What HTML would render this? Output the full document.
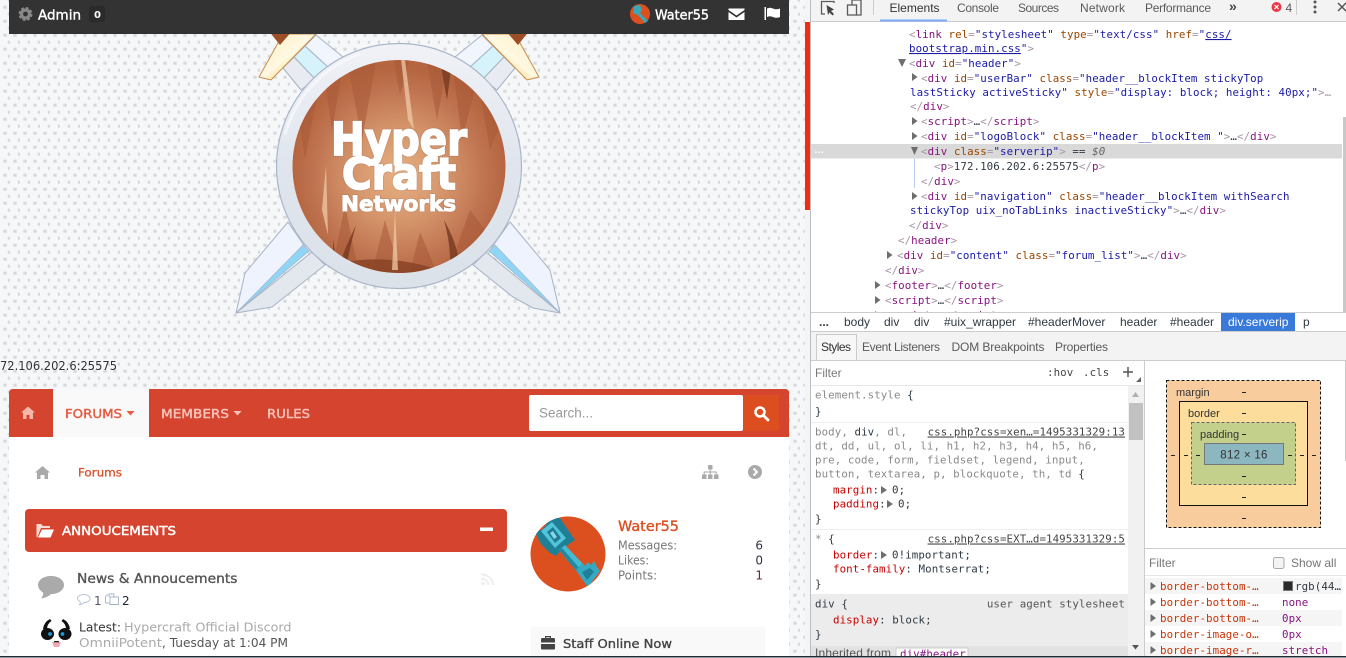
<!DOCTYPE html>
<html><head><meta charset="utf-8"><title>HyperCraft Networks - DevTools</title>
<style>
html,body{margin:0;padding:0;background:#fff;width:1346px;height:658px;overflow:hidden}
svg{display:block;position:absolute;left:0;top:0}
text{white-space:pre}
.s{font-family:"DejaVu Sans","Liberation Sans",sans-serif}
.u{font-family:"Liberation Sans",sans-serif;font-size:12px;fill:#5a5a5a}
.m{font-family:"DejaVu Sans Mono","Liberation Mono",monospace;font-size:10.8px;letter-spacing:.08px;fill:#303942}
.g{fill:#a894a6}.t{fill:#881280}.a{fill:#994500}.v{fill:#1a1aa6}.k{fill:#303942}
.p{fill:#c80000}.l{fill:#8a8a8a}
.n{fill:#c8340a}
</style></head><body>
<svg width="1346" height="658" viewBox="0 0 1346 658" xmlns="http://www.w3.org/2000/svg">
<defs>
<pattern id="dots" width="10" height="14" patternUnits="userSpaceOnUse" x="0" y="0">
<rect x="7.8" y="-1.3" width="3.4" height="3" fill="#d8d9db"/><rect x="7.8" y="12.7" width="3.4" height="3" fill="#d8d9db"/>
<rect x="3.3" y="5.700" width="3.4" height="3" fill="#d8d9db"/>
</pattern>
<radialGradient id="wood" gradientUnits="userSpaceOnUse" cx="399" cy="175" r="108">
<stop offset="0" stop-color="#e6b083"/><stop offset=".45" stop-color="#d4946a"/><stop offset=".8" stop-color="#bf7350"/><stop offset="1" stop-color="#b5653f"/>
</radialGradient>
<linearGradient id="ring" x1="0" y1="0" x2="0" y2="1"><stop offset="0" stop-color="#f0f2f7"/><stop offset=".5" stop-color="#e0e5ed"/><stop offset="1" stop-color="#dce2ea"/></linearGradient>
<linearGradient id="gold" x1="0" y1="1" x2="1" y2="0"><stop offset="0" stop-color="#f9e9c4"/><stop offset=".25" stop-color="#fbd468"/><stop offset=".5" stop-color="#fff8e2"/><stop offset=".8" stop-color="#fff3cf"/><stop offset="1" stop-color="#f7d179"/></linearGradient>
<linearGradient id="gold2" x1="1" y1="1" x2="0" y2="0"><stop offset="0" stop-color="#f9e9c4"/><stop offset=".25" stop-color="#fbd468"/><stop offset=".5" stop-color="#fff8e2"/><stop offset=".8" stop-color="#fff3cf"/><stop offset="1" stop-color="#f7d179"/></linearGradient>
<clipPath id="woodclip"><circle cx="399" cy="166.5" r="106.5"/></clipPath>
<clipPath id="av"><circle cx="568" cy="554" r="37.5"/></clipPath>
<clipPath id="elem"><rect x="811" y="22" width="532" height="290"/></clipPath>
</defs>

<!-- page background -->
<rect width="810" height="658" fill="#f6f7f9"/>
<rect width="806" height="658" fill="url(#dots)"/>

<!-- swords -->
<g stroke="#a6b4c6" stroke-width="1" stroke-linejoin="round">
<polygon points="455,57 469,68 493,46 482,35" fill="#f1f5fe"/>
<polygon points="469,68 483,79 504,57 493,46" fill="#d6f2fb"/>
<polygon points="483,79 497,90 515,68 504,57" fill="#e8ebf1"/>
<polygon points="343,57 329,68 305,46 316,35" fill="#f1f5fe"/>
<polygon points="329,68 315,79 294,57 305,46" fill="#d6f2fb"/>
<polygon points="315,79 301,90 283,68 294,57" fill="#e8ebf1"/>
<polygon points="236,313 245,273 288,222 305,247" fill="#eef3fd"/>
<polygon points="236,313 272,307 325,265 312,252" fill="#e3e7ee"/>
<polygon points="236,313 303,245 309,251" fill="#8fd5f6" stroke="#a6b4c6" stroke-width=".7"/>
<polygon points="560,313 550,270 510,222 492,247" fill="#eef3fd"/>
<polygon points="560,313 533,308 513,297 473,265 486,252" fill="#e3e7ee"/>
<polygon points="560,313 495,245 489,251" fill="#8fd5f6" stroke="#a6b4c6" stroke-width=".7"/>
</g>
<!-- guards & handles -->
<polygon points="482,34 527,80 539,77 515,34" fill="url(#gold)" stroke="#c98d4a"/>
<polygon points="316,34 271,80 259,77 283,34" fill="url(#gold2)" stroke="#c98d4a"/>
<polygon points="505,30 530,30 518,45" fill="#9c4e26"/>
<polygon points="293,30 268,30 280,45" fill="#9c4e26"/>

<!-- ring -->
<circle cx="399" cy="166" r="122.5" fill="url(#ring)" stroke="#a9b6c8" stroke-width="1.2"/>
<path d="M285 135 A118 118 0 0 1 360 54" fill="none" stroke="#f8f9fc" stroke-width="3" opacity=".7"/>
<circle cx="399" cy="166.5" r="106.5" fill="url(#wood)"/>
<g clip-path="url(#woodclip)">
<g fill="#a8593a" opacity=".55">
<polygon points="295,90 305,160 320,80"/><polygon points="322,60 332,130 345,55"/>
<polygon points="345,50 362,140 378,50"/><polygon points="392,50 400,95 412,50"/>
<polygon points="425,50 437,120 450,50"/><polygon points="452,60 462,140 480,70"/>
<polygon points="478,80 490,150 506,110"/><polygon points="292,180 305,240 320,275 292,260"/>
<polygon points="330,280 345,205 360,280"/><polygon points="370,280 385,220 402,280"/>
<polygon points="408,280 420,232 440,280"/><polygon points="445,280 470,210 500,250 490,280"/>
</g>
<g fill="#7a3d22" opacity=".85">
<polygon points="323,72 340,62 330,86"/><polygon points="440,60 452,62 447,100"/>
<polygon points="333,262 333,240 336,258"/>
<polygon points="500,210 488,238 504,216"/>
<path d="M338 268 Q345 248 356 225 Q349 250 346 270Z"/><path d="M450 268 Q451 245 444 220 Q458 245 459 265Z"/>
<path d="M345 262 Q390 254 440 270 L430 285 L350 285Z" fill="#8a4426"/>
</g>
<g fill="#efc9a6" opacity=".75">
<polygon points="400,50 405,60 414,130 408,120"/><polygon points="392,270 395,210 398,270"/><polygon points="322,210 326,165 328,235"/>
</g>
</g>
<g class="s" font-weight="700" fill="#fff" stroke="#fff" stroke-width="1.800" style="filter:drop-shadow(0 0 .6px #9a6048)">
<text x="331" y="155" font-size="45" textLength="136" lengthAdjust="spacingAndGlyphs">Hyper</text>
<text x="342" y="189" font-size="44" textLength="114" lengthAdjust="spacingAndGlyphs">Craft</text>
<text x="341" y="211" font-size="21" textLength="115" lengthAdjust="spacingAndGlyphs" stroke-width="1">Networks</text>
</g>

<!-- top bar -->
<rect x="9" width="780" height="34" fill="#333"/>
<circle cx="25.5" cy="14" r="4" fill="none" stroke="#888" stroke-width="3.2"/>
<circle cx="25.5" cy="14" r="5.9" fill="none" stroke="#888" stroke-width="2.2" stroke-dasharray="2.8 1.85"/>
<text class="s" x="38" y="19.5" font-size="13.5" font-weight="500" fill="#fff" stroke="#fff" stroke-width=".4" textLength="43" lengthAdjust="spacingAndGlyphs">Admin</text>
<rect x="89" y="6" width="16" height="16" rx="2" fill="#2a2a2a"/>
<text class="s" x="94" y="18" font-size="10" font-weight="700" fill="#fff">0</text>
<circle cx="640" cy="14" r="10" fill="#dc5020"/>
<path d="M634 6 L640 5 L642 10 L640 13 L648 21 L645 23 L638 15 L633 13Z" fill="#3aa7b8"/>
<text class="s" x="655" y="19.5" font-size="13.5" font-weight="500" fill="#fff" stroke="#fff" stroke-width=".4" textLength="54" lengthAdjust="spacingAndGlyphs">Water55</text>
<path d="M728.5 8.500 H744.5 V10 L736.5 15.500 L728.5 10Z M728.5 12 L736.5 17.500 L744.5 12 V20 H728.5Z" fill="#fff"/>
<path d="M764.5 7 H766 V20 H764.5Z M767 8.5 Q770 7 773 8.5 T780 8.5 V17 Q776.500 18.500 773 17 T767 17Z" fill="#fff"/>

<!-- server ip -->
<text class="s" x="0" y="370" font-size="12.500" fill="#333" textLength="117" lengthAdjust="spacingAndGlyphs">72.106.202.6:25575</text>

<!-- main content -->
<rect x="9" y="430" width="780" height="227" fill="#fff"/>
<path d="M9 437 V393 Q9 389 13 389 H785 Q789 389 789 393 V437Z" fill="#d5442f"/>
<rect x="53" y="389" width="96" height="48" fill="#f9f9f9"/>
<path d="M28 406.500 L35 412.500 H33 V419 H29.500 V415 H26.500 V419 H23 V412.500 H21Z" fill="#f6b7aa"/>
<g class="s" font-size="12.500" font-weight="500" stroke-width=".4">
<text x="65" y="418" fill="#e65a3f" stroke="#e65a3f" textLength="57" lengthAdjust="spacingAndGlyphs">FORUMS</text>
<text x="161" y="418" fill="#f5c4ba" stroke="#f5c4ba" textLength="68" lengthAdjust="spacingAndGlyphs">MEMBERS</text>
<text x="267" y="418" fill="#f5c4ba" stroke="#f5c4ba" textLength="43" lengthAdjust="spacingAndGlyphs">RULES</text>
</g>
<polygon points="126.500,411 134.500,411 130.500,415.500" fill="#e65a3f"/>
<polygon points="233.500,411 241.500,411 237.500,415.500" fill="#f5c4ba"/>
<rect x="529" y="395" width="214" height="36" rx="2" fill="#fff"/>
<rect x="743" y="395" width="36" height="36" fill="#dc4e20"/>
<text class="u" x="539" y="417.500" style="font-size:13.500px;fill:#999">Search...</text>
<circle cx="760" cy="412" r="4.500" fill="none" stroke="#fff" stroke-width="2.500"/>
<path d="M763.500 415.500 L768 420" stroke="#fff" stroke-width="2.800" stroke-linecap="round"/>

<!-- breadcrumb -->
<path d="M42.500 466 L50 472.500 H48 V479 H44.500 V475 H40.500 V479 H37 V472.500 H35Z" fill="#aaa"/>
<text class="s" x="78" y="476.500" font-size="11.500" fill="#d9502a" stroke="#d9502a" stroke-width=".3" textLength="44" lengthAdjust="spacingAndGlyphs">Forums</text>
<g fill="#aaa"><rect x="708" y="465" width="4.500" height="4.500" rx=".8"/><rect x="702" y="474.500" width="4.500" height="4.500"/><rect x="708" y="474.500" width="4.500" height="4.500"/><rect x="714" y="474.500" width="4.500" height="4.500"/></g>
<path d="M710.200 469 V474.500 M704.200 474.500 V472 H716.200 V474.500" stroke="#aaa" fill="none"/>
<circle cx="755" cy="472" r="7" fill="#aaa"/>
<path d="M753.500 468.500 L757 472 L753.500 475.500" fill="none" stroke="#fff" stroke-width="2"/>

<!-- panel header -->
<rect x="25" y="509" width="482" height="43" rx="4" fill="#d5442f"/>
<path d="M36.500 537 V524 H41 L43 526 H50 V528 H41 L37.500 537Z" fill="#f7dcd6"/><path d="M38 537.500 L42 529.500 H54 L50.500 537.500Z" fill="#fff"/>
<text class="s" x="62" y="535" font-size="12.500" font-weight="500" fill="#fff" stroke="#fff" stroke-width=".45" textLength="114" lengthAdjust="spacingAndGlyphs">ANNOUCEMENTS</text>
<rect x="480" y="527.500" width="13" height="3.500" rx=".5" fill="#fff"/>

<!-- forum row -->
<path d="M51 576 C58.500 576 64 580 64 585 C64 590 58.500 594 51.500 594 C48 596.500 45 598 41 598.500 C43 596 43.500 594 43 592.500 C40 590.500 38 588 38 585 C38 580 43.500 576 51 576Z" fill="#aaa"/>
<text class="s" x="77" y="583" font-size="13.500" fill="#555" stroke="#555" stroke-width=".35" textLength="160.500" lengthAdjust="spacingAndGlyphs">News &amp; Annoucements</text>
<path d="M83.500 594.500 C87.500 594.500 90 596.500 90 598.500 C90 601 87.500 602.500 84 602.500 C82.500 604 81 604.500 79.500 604.500 C80.500 603.500 80.500 602.500 80 601.500 C78 600.500 77.500 599.500 77.500 598.500 C77.500 596.500 80 594.500 83.500 594.500Z" fill="none" stroke="#b4c2d6" stroke-width=".9"/>
<text class="s" x="94" y="605" font-size="12" fill="#556">1</text>
<path d="M109 597 V594 H114 V597 M105.500 603 V596.500 L108 594.500 M110 597 H118.500 V604.500 H110Z M105.500 603 H110" fill="none" stroke="#a4b4c6" stroke-width=".9"/>
<text class="s" x="122" y="605" font-size="12" fill="#223">2</text>
<g fill="none" stroke="#eee" stroke-width="2"><path d="M481 574.500 A11 11 0 0 1 493 585"/><path d="M481 579 A6.500 6.500 0 0 1 488.500 585"/></g><circle cx="483" cy="583.500" r="1.800" fill="#eee"/>

<!-- panda -->
<path d="M43 629 Q44 622 50 619 L51.500 621 Q47 624 47 629 Z M70 629 Q69 622 63 619 L61.500 621 Q66 624 66 629Z" fill="#111"/>
<ellipse cx="47.500" cy="634" rx="6.500" ry="6" fill="#111"/><ellipse cx="65" cy="634" rx="6.500" ry="6" fill="#111"/>
<circle cx="50" cy="634" r="1.900" fill="#1d9be0"/><circle cx="62.500" cy="634" r="1.900" fill="#1d9be0"/>
<path d="M52 642 H61 L59 647 H54Z" fill="#f2a7b4"/><rect x="54" y="641" width="5" height="1.300" fill="#222"/>
<text class="s" x="79" y="631.500" font-size="12" fill="#333" textLength="42" lengthAdjust="spacingAndGlyphs">Latest:</text>
<text class="s" x="124" y="631.500" font-size="12.500" fill="#aaa" textLength="167.500" lengthAdjust="spacingAndGlyphs">Hypercraft Official Discord</text>
<text class="s" x="79" y="647" font-size="12.500" fill="#aaa" textLength="83" lengthAdjust="spacingAndGlyphs">OmniiPotent</text>
<text class="s" x="162" y="647" font-size="12.500" fill="#555" textLength="126" lengthAdjust="spacingAndGlyphs">, Tuesday at 1:04 PM</text>

<!-- visitor panel -->
<circle cx="568" cy="554" r="37.500" fill="#dc5020"/>
<g clip-path="url(#av)">
<path d="M535 532 L543 529 L551 518 L560 518 L575 540 L562 549 L556 556 L550 553 L541 544Z" fill="#1f7f97"/>
<path d="M541 531 L552 522 L566 538 L555 548Z" fill="#4fc4da"/>
<path d="M547 532 L553 527 L561 538 L555 543Z" fill="#237a90"/>
<path d="M550 533 L553 531 L557 537 L554 539Z" fill="#7fd9e8"/>
<path d="M559 550 L565 545 L585 566 L578 573Z" fill="#45bbd2"/>
<path d="M559 550 L562 548 L581 570 L578 573Z" fill="#1f8aa2"/>
<path d="M576 570 L582 563 L585 566 L588 562 L591 565 L594 561 L597 567 L600 571 L588 587 L582 579Z" fill="#35a9c2"/>
<path d="M582 572 L590 568 L594 572 L587 580Z" fill="#1f7f97"/>
</g>
<text class="s" x="618" y="531" font-size="14.500" fill="#dc4e20" stroke="#dc4e20" stroke-width=".35" textLength="61" lengthAdjust="spacingAndGlyphs">Water55</text>
<g class="s" font-size="12" fill="#777">
<text x="618" y="549.500" textLength="59" lengthAdjust="spacingAndGlyphs">Messages:</text>
<text x="618" y="564.500" textLength="31" lengthAdjust="spacingAndGlyphs">Likes:</text>
<text x="618" y="579.500" textLength="39" lengthAdjust="spacingAndGlyphs">Points:</text>
</g>
<g class="s" font-size="12" fill="#334" text-anchor="end">
<text x="763" y="549.500">6</text><text x="763" y="564.500">0</text><text x="763" y="579.500" fill="#702040">1</text>
</g>
<rect x="531" y="627" width="234" height="29" fill="#f9f9f9"/>
<path d="M541 639.500 Q541 638 542.500 638 H553.500 Q555 638 555 639.500 V642.500 H541Z M541 644 H555 V648.500 Q555 649.500 553.500 649.500 H542.500 Q541 649.500 541 648.500Z M545 638 V636 H551 V638 H549.800 V637.200 H546.200 V638Z" fill="#444"/>
<text class="s" x="563" y="648" font-size="12.500" fill="#444" stroke="#444" stroke-width=".35" textLength="109" lengthAdjust="spacingAndGlyphs">Staff Online Now</text>

<!-- DevTools -->
<rect x="805" y="0" width="541" height="658" fill="#fff"/>
<rect x="805" width="5" height="22" fill="#f4f5f7"/>
<rect x="805" y="22" width="5" height="188" fill="#f32a14"/>
<rect x="805" y="210" width="5" height="448" fill="#f4f5f7"/>
<rect x="810" width="1" height="658" fill="#bdbdbd"/>
<rect x="811" width="535" height="21" fill="#f3f3f3"/>
<rect x="811" y="21" width="535" height="1" fill="#ccc"/>
<rect x="880" y="19.500" width="67" height="2" fill="#7baaf7"/>
<path d="M834 3 V1.500 H821.500 V14 H825" fill="none" stroke="#5a5a5a" stroke-width="1.300"/>
<path d="M826.500 5 L834 9.500 L831 11 L834 14 L832.500 15.500 L829.500 12.500 L828 15Z" fill="#444"/>
<rect x="847.500" y="5" width="9" height="10" fill="none" stroke="#5a5a5a" stroke-width="1.300"/>
<path d="M852 5 V0 H861 V15 H856.500" fill="none" stroke="#5a5a5a" stroke-width="1.300"/>
<rect x="873" y="0" width="1" height="15" fill="#ccc"/>
<text class="u" x="889.500" y="12" style="fill:#333">Elements</text>
<text class="u" x="957" y="12" textLength="42" lengthAdjust="spacing">Console</text>
<text class="u" x="1018" y="12" textLength="41" lengthAdjust="spacing">Sources</text>
<text class="u" x="1080" y="12" textLength="45" lengthAdjust="spacing">Network</text>
<text class="u" x="1145" y="12" textLength="66" lengthAdjust="spacing">Performance</text>
<text class="u" x="1229" y="11" style="font-size:14px;fill:#444;font-weight:700">»</text>
<circle cx="1276.500" cy="7" r="5" fill="#e8394a"/>
<path d="M1274.500 5 L1278.500 9 M1278.500 5 L1274.500 9" stroke="#fff" stroke-width="1.200"/>
<text class="u" x="1285.500" y="12">4</text>
<rect x="1296" y="0" width="1" height="15" fill="#ccc"/>
<g fill="#555"><circle cx="1315" cy="2" r="1.500"/><circle cx="1315" cy="7" r="1.500"/><circle cx="1315" cy="12" r="1.500"/></g>
<path d="M1338 3 L1346 11 M1346 3 L1338 11" stroke="#555" stroke-width="1.500"/>

<!-- elements tree -->
<rect x="811" y="144" width="531" height="14.500" fill="#d9d9d9"/>
<rect x="1343" y="117" width="3" height="195" fill="#c8c8c8"/>
<rect x="914" y="159" width="1" height="29" fill="#b7cdee"/>
<text class="u" x="814" y="153" style="font-size:10px;fill:#fff;font-weight:700">…</text>
<g clip-path="url(#elem)">
<g fill="#6e6e6e">
<polygon points="898,59 906,59 902,67"/><polygon points="912,73 917.500,77 912,81"/><polygon points="912,117 917.500,121 912,125"/><polygon points="912,132 917.500,136 912,140"/>
<polygon points="911,147 918,147 914.500,155"/><polygon points="912,192 917.500,196 912,200"/><polygon points="887,251 892.500,255 887,259"/><polygon points="875,281 880.500,285 875,289"/><polygon points="875,296 880.500,300 875,304"/><polygon points="875,311 880.500,315 875,319"/>
</g>
<g class="m">
<text x="898" y="22"><tspan class="g">&lt;</tspan><tspan class="t">header</tspan><tspan class="g">&gt;</tspan></text>
<text x="909" y="38"><tspan class="g">&lt;</tspan><tspan class="t">link</tspan> <tspan class="a">rel</tspan><tspan class="g">=</tspan><tspan class="v">"stylesheet"</tspan> <tspan class="a">type</tspan><tspan class="g">=</tspan><tspan class="v">"text/css"</tspan> <tspan class="a">href</tspan><tspan class="g">=</tspan><tspan class="v">"</tspan><tspan class="v" text-decoration="underline">css/</tspan></text>
<text x="909" y="52"><tspan class="v" text-decoration="underline">bootstrap.min.css</tspan><tspan class="v">"</tspan><tspan class="g">&gt;</tspan></text>
<text x="909" y="67"><tspan class="g">&lt;</tspan><tspan class="t">div</tspan> <tspan class="a">id</tspan><tspan class="g">=</tspan><tspan class="v">"header"</tspan><tspan class="g">&gt;</tspan></text>
<text x="921" y="82"><tspan class="g">&lt;</tspan><tspan class="t">div</tspan> <tspan class="a">id</tspan><tspan class="g">=</tspan><tspan class="v">"userBar"</tspan> <tspan class="a">class</tspan><tspan class="g">=</tspan><tspan class="v">"header__blockItem stickyTop</tspan></text>
<text x="910" y="96"><tspan class="v">lastSticky activeSticky"</tspan> <tspan class="a">style</tspan><tspan class="g">=</tspan><tspan class="v">"display: block; height: 40px;"</tspan><tspan class="g">&gt;…</tspan></text>
<text x="910" y="110"><tspan class="g">&lt;/</tspan><tspan class="t">div</tspan><tspan class="g">&gt;</tspan></text>
<text x="921" y="125"><tspan class="g">&lt;</tspan><tspan class="t">script</tspan><tspan class="g">&gt;</tspan>…<tspan class="g">&lt;/</tspan><tspan class="t">script</tspan><tspan class="g">&gt;</tspan></text>
<text x="921" y="140"><tspan class="g">&lt;</tspan><tspan class="t">div</tspan> <tspan class="a">id</tspan><tspan class="g">=</tspan><tspan class="v">"logoBlock"</tspan> <tspan class="a">class</tspan><tspan class="g">=</tspan><tspan class="v">"header__blockItem "</tspan><tspan class="g">&gt;</tspan>…<tspan class="g">&lt;/</tspan><tspan class="t">div</tspan><tspan class="g">&gt;</tspan></text>
<text x="921" y="155"><tspan class="g">&lt;</tspan><tspan class="t">div</tspan> <tspan class="a">class</tspan><tspan class="g">=</tspan><tspan class="v">"serverip"</tspan><tspan class="g">&gt;</tspan> == <tspan font-style="italic" fill="#666">$0</tspan></text>
<text x="934" y="170"><tspan class="g">&lt;</tspan><tspan class="t">p</tspan><tspan class="g">&gt;</tspan>172.106.202.6:25575<tspan class="g">&lt;/</tspan><tspan class="t">p</tspan><tspan class="g">&gt;</tspan></text>
<text x="921" y="185"><tspan class="g">&lt;/</tspan><tspan class="t">div</tspan><tspan class="g">&gt;</tspan></text>
<text x="921" y="200"><tspan class="g">&lt;</tspan><tspan class="t">div</tspan> <tspan class="a">id</tspan><tspan class="g">=</tspan><tspan class="v">"navigation"</tspan> <tspan class="a">class</tspan><tspan class="g">=</tspan><tspan class="v">"header__blockItem withSearch</tspan></text>
<text x="910" y="214"><tspan class="v">stickyTop uix_noTabLinks inactiveSticky"</tspan><tspan class="g">&gt;</tspan>…<tspan class="g">&lt;/</tspan><tspan class="t">div</tspan><tspan class="g">&gt;</tspan></text>
<text x="909" y="229"><tspan class="g">&lt;/</tspan><tspan class="t">div</tspan><tspan class="g">&gt;</tspan></text>
<text x="898" y="244"><tspan class="g">&lt;/</tspan><tspan class="t">header</tspan><tspan class="g">&gt;</tspan></text>
<text x="897" y="259"><tspan class="g">&lt;</tspan><tspan class="t">div</tspan> <tspan class="a">id</tspan><tspan class="g">=</tspan><tspan class="v">"content"</tspan> <tspan class="a">class</tspan><tspan class="g">=</tspan><tspan class="v">"forum_list"</tspan><tspan class="g">&gt;</tspan>…<tspan class="g">&lt;/</tspan><tspan class="t">div</tspan><tspan class="g">&gt;</tspan></text>
<text x="885" y="274"><tspan class="g">&lt;/</tspan><tspan class="t">div</tspan><tspan class="g">&gt;</tspan></text>
<text x="885" y="289"><tspan class="g">&lt;</tspan><tspan class="t">footer</tspan><tspan class="g">&gt;</tspan>…<tspan class="g">&lt;/</tspan><tspan class="t">footer</tspan><tspan class="g">&gt;</tspan></text>
<text x="885" y="304"><tspan class="g">&lt;</tspan><tspan class="t">script</tspan><tspan class="g">&gt;</tspan>…<tspan class="g">&lt;/</tspan><tspan class="t">script</tspan><tspan class="g">&gt;</tspan></text>
<text x="885" y="319"><tspan class="g">&lt;</tspan><tspan class="t">script</tspan><tspan class="g">&gt;</tspan>…<tspan class="g">&lt;/</tspan><tspan class="t">script</tspan><tspan class="g">&gt;</tspan></text>
</g>
</g>

<!-- breadcrumb bar -->
<rect x="811" y="312" width="535" height="19.500" fill="#fff"/>
<rect x="811" y="312" width="535" height="1" fill="#ccc"/>
<rect x="811" y="331" width="535" height="1" fill="#ccc"/>
<rect x="1221" y="313" width="74" height="18" fill="#3879d9"/>
<g class="u" style="fill:#303942">
<text x="819" y="326" style="font-weight:700">...</text>
<text x="844" y="326">body</text><text x="884" y="326">div</text><text x="914" y="326">div</text>
<text x="944" y="326">#uix_wrapper</text><text x="1028" y="326">#headerMover</text>
<text x="1120" y="326">header</text><text x="1170" y="326">#header</text>
<text x="1228" y="326" style="fill:#fff">div.serverip</text>
<text x="1303" y="326">p</text>
</g>

<!-- styles tabs -->
<rect x="811" y="332" width="535" height="28" fill="#f3f3f3"/>
<rect x="811" y="360" width="535" height="1" fill="#ccc"/>
<rect x="816.500" y="334.500" width="40" height="26" fill="#f7f7f7" stroke="#ccc"/>
<text class="u" x="821" y="351" style="fill:#333" textLength="30" lengthAdjust="spacing">Styles</text>
<text class="u" x="862" y="351" textLength="78" lengthAdjust="spacing">Event Listeners</text>
<text class="u" x="951.500" y="351" textLength="93" lengthAdjust="spacing">DOM Breakpoints</text>
<text class="u" x="1055" y="351" textLength="53" lengthAdjust="spacing">Properties</text>

<!-- filter row -->
<rect x="811" y="385" width="333" height="1" fill="#e6e6e6"/>
<text class="u" x="815" y="377" style="fill:#777">Filter</text>
<g class="m"><text x="1047" y="376" style="fill:#444">:hov</text><text x="1083" y="376" style="fill:#444">.cls</text></g>
<path d="M1128 367 V377 M1123 372 H1133" stroke="#555" stroke-width="1.400"/>
<polygon points="1141,377 1141,382 1136,382" fill="#666"/>

<!-- styles content -->
<rect x="811" y="422" width="317" height="1" fill="#eee"/>
<rect x="811" y="529" width="317" height="1" fill="#eee"/>
<rect x="811" y="594" width="317" height="52" fill="#ececec"/>
<rect x="811" y="646" width="317" height="11" fill="#e2e2e2"/>
<rect x="896" y="648" width="72" height="9" rx="1" fill="#fff" stroke="#ccc"/>
<rect x="1128" y="386" width="16" height="271" fill="#f1f1f1"/>
<rect x="1129" y="403" width="14" height="37" fill="#c1c1c1"/>
<polygon points="1135.500,392 1132,397 1139,397" fill="#b0b0b0"/>
<polygon points="1135.500,649.500 1132,645 1139,645" fill="#555"/>
<rect x="1144" y="361" width="1" height="296" fill="#ccc"/>
<g class="m">
<text x="815" y="398.500"><tspan class="l">element.style</tspan> {</text>
<text x="815" y="415">}</text>
<text x="815" y="435.500"><tspan class="l">body,</tspan> div<tspan class="l">, dl,</tspan></text>
<text x="1125" y="435.500" text-anchor="end" text-decoration="underline" style="fill:#444">css.php?css=xen…=1495331329:13</text>
<text x="815" y="449.500" class="l">dt, dd, ul, ol, li, h1, h2, h3, h4, h5, h6,</text>
<text x="815" y="463.500" class="l">pre, code, form, fieldset, legend, input,</text>
<text x="815" y="477.500"><tspan class="l">button, textarea, p, blockquote, th, td</tspan> {</text>
<text x="833" y="493.500"><tspan class="p">margin</tspan>:</text><polygon points="881,486 887,490 881,494" fill="#6e6e6e"/><text x="892" y="493.500">0;</text>
<text x="833" y="507.500"><tspan class="p">padding</tspan>:</text><polygon points="887,500 893,504 887,508" fill="#6e6e6e"/><text x="898" y="507.500">0;</text>
<text x="815" y="522.500">}</text>
<text x="815" y="542.500"><tspan class="l">*</tspan> {</text>
<text x="1125" y="542.500" text-anchor="end" text-decoration="underline" style="fill:#444">css.php?css=EXT…d=1495331329:5</text>
<text x="833" y="558.500"><tspan class="p">border</tspan>:</text><polygon points="881,551 887,555 881,559" fill="#6e6e6e"/><text x="892" y="558.500">0!important;</text>
<text x="833" y="572.500"><tspan class="p">font-family</tspan>: Montserrat;</text>
<text x="815" y="587.500">}</text>
<text x="815" y="607.500">div {</text>
<text x="1125" y="607.500" text-anchor="end" style="fill:#555">user agent stylesheet</text>
<text x="833" y="623.500"><tspan class="p">display</tspan>: block;</text>
<text x="815" y="638">}</text>
<text x="900" y="657.500" class="t">div#header</text>
</g>
<text class="u" x="815" y="657" textLength="76" lengthAdjust="spacing" style="fill:#555">Inherited from</text>

<!-- box model -->
<rect x="1345" y="361" width="1" height="100" fill="#c8c8c8"/>
<rect x="1166.500" y="380.500" width="154" height="147" fill="#f9cc9d" stroke="#111" stroke-dasharray="3 2"/>
<rect x="1179.500" y="401.500" width="128" height="104" fill="#fddd9b" stroke="#111"/>
<rect x="1191.500" y="422.500" width="104" height="62" fill="#c3d08b" stroke="#666" stroke-dasharray="3 2"/>
<rect x="1204.500" y="443.500" width="79" height="21" fill="#8cb6c0" stroke="#777"/>
<g class="u" style="fill:#333">
<text x="1176" y="396" style="font-size:11px;fill:#333">margin</text><text x="1188" y="417" style="font-size:11px;fill:#333">border</text><text x="1200" y="438" style="font-size:11px;fill:#333">padding</text>
<text x="1244" y="458.500" text-anchor="middle" style="font-size:11.500px;fill:#333;letter-spacing:.3px">812 × 16</text>
</g>
<g fill="#222">
<rect x="1242" y="392" width="4" height="1"/><rect x="1242" y="413" width="4" height="1"/><rect x="1242" y="434" width="4" height="1"/>
<rect x="1171" y="455" width="4" height="1"/><rect x="1184" y="455" width="4" height="1"/><rect x="1196" y="455" width="4" height="1"/>
<rect x="1288" y="455" width="4" height="1"/><rect x="1300" y="455" width="4" height="1"/><rect x="1312" y="455" width="4" height="1"/>
<rect x="1242" y="476" width="4" height="1"/><rect x="1242" y="497" width="4" height="1"/><rect x="1242" y="518" width="4" height="1"/>
</g>

<!-- computed -->
<rect x="1145" y="548" width="201" height="1" fill="#ccc"/>
<text class="u" x="1149" y="567" style="fill:#777">Filter</text>
<rect x="1273.500" y="557.500" width="10.500" height="11" rx="2" fill="#f4f4f4" stroke="#aaa"/>
<text class="u" x="1291" y="567" style="fill:#777">Show all</text>
<rect x="1145" y="575" width="201" height="1" fill="#e6e6e6"/>
<rect x="1145" y="578" width="197" height="16" fill="#f5f5f5"/>
<rect x="1145" y="610" width="197" height="16" fill="#f5f5f5"/>
<rect x="1145" y="642" width="197" height="15" fill="#f5f5f5"/>
<g fill="#6e6e6e"><polygon points="1150.500,582 1156,586 1150.500,590"/><polygon points="1150.500,598 1156,602 1150.500,606"/><polygon points="1150.500,614 1156,618 1150.500,622"/><polygon points="1150.500,630 1156,634 1150.500,638"/><polygon points="1150.500,646 1156,650 1150.500,654"/></g>
<g class="m">
<text x="1160" y="590" class="n">border-bottom-…</text>
<text x="1160" y="606" class="n">border-bottom-…</text>
<text x="1160" y="622" class="n">border-bottom-…</text>
<text x="1160" y="638" class="n">border-image-o…</text>
<text x="1160" y="654" class="n">border-image-r…</text>
<text x="1295" y="590">rgb(44…</text>
<text x="1282" y="606" class="t">none</text>
<text x="1282" y="622" class="t">0px</text>
<text x="1282" y="638" class="t">0px</text>
<text x="1282" y="654" class="t">stretch</text>
</g>
<rect x="1283.500" y="581.500" width="9" height="9" fill="#2c2c2c" stroke="#777"/>

<!-- bottom edge -->
<rect x="0" y="656" width="1346" height="1" fill="#2a2a2a"/>
<rect x="0" y="657" width="1346" height="1" fill="#8a97a8"/>
</svg>
</body></html>
